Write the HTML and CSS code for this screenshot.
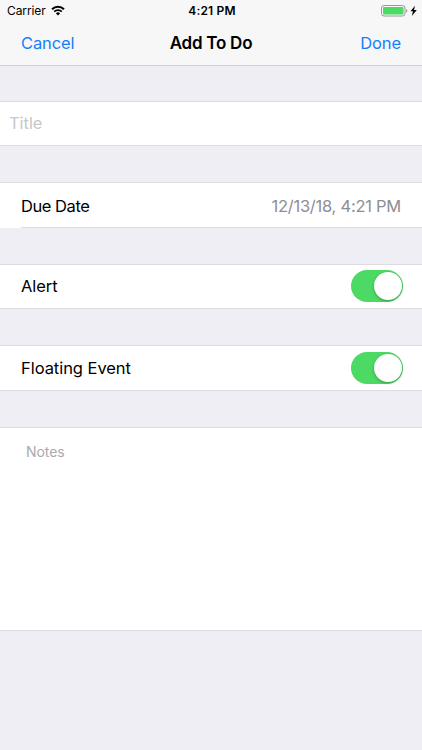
FILE: index.html
```html
<!DOCTYPE html>
<html lang="en">

<head>
    <meta charset="UTF-8">
    <meta name="viewport" content="width=device-width, initial-scale=1.0">
    <title>Add To Do</title>
    <link rel="stylesheet" href="styles.css">
</head>

<body>

<header>
    <div class="statusbar">
        <div class="carrier">
            <span>Carrier</span>
            <svg width="14" height="11" viewBox="0 0 14 11">
                <path d="M1 4.2a8.6 8.6 0 0 1 12 0" fill="none" stroke="#000" stroke-width="2"/>
                <path d="M3.2 6.7a5.4 5.4 0 0 1 7.6 0" fill="none" stroke="#000" stroke-width="1.8"/>
                <path d="M4.9 8.4a3 3 0 0 1 4.2 0L7 10.5z"/>
            </svg>
        </div>
        <div class="time">4:21 PM</div>
        <div class="power">
            <svg width="37" height="12" viewBox="0 0 37 12">
                <rect x="0.5" y="0.5" width="23.5" height="10.5" rx="2.5" fill="none" stroke="#98989b"/>
                <rect x="2" y="2" width="20.5" height="7.5" rx="1" fill="#4cd964"/>
                <path d="M25.2 4c1.6.5 1.6 3.1 0 3.6z" fill="#98989b"/>
                <path d="M34 .8l-4.500 5.500h2.500l-1.200 4.700 5-6h-2.800z"/>
            </svg>
        </div>
    </div>
    <nav>
        <a>Cancel</a>
        <h1>Add To Do</h1>
        <a class="done">Done</a>
    </nav>
</header>

<form>
    <div class="row title">
        <input type="text" placeholder="Title">
    </div>
    <div class="row due">
        <span class="dueLabel">Due Date</span>
        <span class="date">12/13/18, 4:21 PM</span>
    </div>
    <div class="row alert">
        <label for="alert">Alert</label>
        <input class="switch" type="checkbox" id="alert" checked>
    </div>
    <div class="row floating">
        <label for="floating">Floating Event</label>
        <input class="switch" type="checkbox" id="floating" checked>
    </div>
    <div class="row notes">
        <textarea placeholder="Notes"></textarea>
    </div>
</form>

</body>

</html>
```

FILE: styles.css
```css
* {
    box-sizing: border-box;
}

body {
    margin: 0;
    height: 750px;
    overflow: hidden;
    background: #efeef4;
    color: #000;
    font-family: Inter, "Liberation Sans", sans-serif;
    font-size: 16.5px;
}

header {
    height: 66px;
    background: #f7f7f8;
    border-bottom: 1px solid #cfcfd3;
}

.statusbar {
    display: grid;
    grid-template-columns: 1fr auto 1fr;
    align-items: center;
    height: 21px;
    font-size: 12px;
}

.carrier {
    display: flex;
    align-items: center;
    gap: 5px;
    padding-left: 7px;
    letter-spacing: -0.1px;
}

.time {
    padding-left: 2px;
    font-weight: 600;
    letter-spacing: 0.2px;
}

.power {
    display: flex;
    justify-content: flex-end;
    padding-right: 4px;
}

nav {
    display: grid;
    grid-template-columns: 1fr auto 1fr;
    align-items: center;
    height: 43px;
    padding: 0 21px;
}

nav a {
    color: #157efb;
    letter-spacing: -0.1px;
}

.done {
    text-align: right;
}

h1 {
    margin: 0;
    font-size: 17px;
    font-weight: 600;
    letter-spacing: -0.25px;
}

.row {
    display: flex;
    align-items: center;
    justify-content: space-between;
    height: 46px;
    padding: 0 19px 0 21px;
    background: #fff;
    border-top: 1px solid #dcdbe0;
    border-bottom: 1px solid #dcdbe0;
    letter-spacing: -0.05px;
}

input[type=text], textarea {
    width: 100%;
    padding: 0;
    border: 0;
    outline: 0;
    background: none;
    font: inherit;
    letter-spacing: inherit;
    resize: none;
}

.title {
    margin-top: 35px;
    padding-left: 9px;
    padding-bottom: 1px;
    height: 45px;
}

.title input::placeholder {
    color: #c7c7cc;
}

.due {
    position: relative;
    margin-top: 36px;
    padding-top: 1px;
    padding-right: 21px;
    letter-spacing: -0.25px;
}

/* the bottom separator starts at the label */
.due::before {
    content: "";
    position: absolute;
    left: 0;
    bottom: -1px;
    width: 21px;
    height: 1px;
    background: #fff;
}

.dueLabel {
    letter-spacing: -0.45px;
}

.date {
    color: #8e8e93;
}

.alert {
    margin-top: 36px;
    padding-bottom: 1px;
    height: 45px;
}

.floating {
    margin-top: 36px;
}

.switch {
    appearance: none;
    display: flex;
    width: 52px;
    height: 32px;
    margin: 0;
    padding: 2px 1.5px;
    border-radius: 16px;
    background: #e5e5ea;
}

.switch::before {
    content: "";
    width: 28px;
    height: 28px;
    border-radius: 50%;
    background: #fff;
    box-shadow: 0 1px 3px rgba(0, 0, 0, 0.3);
}

.switch:checked {
    justify-content: flex-end;
    background: #4cd964;
}

.notes {
    align-items: stretch;
    margin-top: 36px;
    height: 204px;
    padding: 15px 26px;
    font-size: 14px;
}

.notes textarea::placeholder {
    color: #aaa;
}
```
